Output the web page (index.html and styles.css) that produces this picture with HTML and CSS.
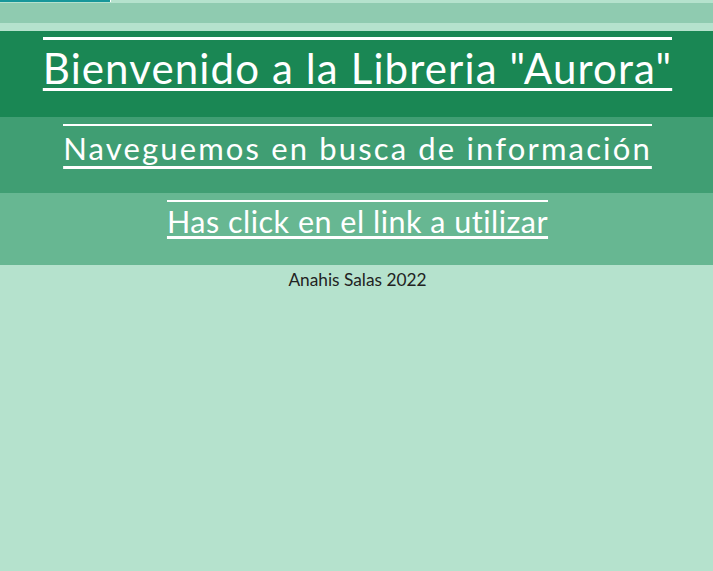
FILE: index.html
```html
<!DOCTYPE html>
<html lang="es">
<head>
<meta charset="utf-8">
<title>Libreria Aurora</title>
<link rel="stylesheet" href="styles.css">
</head>
<body>
<div class="topline"><div class="topline-mark"></div></div>
<div class="stripe"></div>
<header>
  <div class="band band-1"><h1 class="heading heading-1">Bienvenido a la Libreria "Aurora"</h1></div>
  <div class="band band-2"><h2 class="heading heading-2">Naveguemos en busca de información</h2></div>
  <div class="band band-3"><h3 class="heading heading-3">Has click en el link a utilizar</h3></div>
</header>
<footer class="footer">Anahis Salas 2022</footer>
</body>
</html>
```

FILE: styles.css
```css
html, body {
  margin: 0;
  padding: 0;
}
body {
  background: #b5e2cd;
  font-family: Lato, "Open Sans", sans-serif;
  min-height: 571px;
}
.topline {
  height: 3px;
}
.topline-mark {
  width: 110px;
  height: 2px;
  background: #17979a;
  border-right: 1px solid #ffffff;
}
.stripe {
  height: 20px;
  background: #8fcbb0;
  margin-bottom: 8px;
}
.band {
  box-sizing: border-box;
  text-align: center;
  color: #ffffff;
  padding-left: 2px;
}
.band-1 {
  background: #1a8754;
  height: 86px;
  padding-top: 6px;
}
.band-2 {
  background: #409e73;
  height: 76px;
  padding-top: 7px;
}
.band-3 {
  background: #67b792;
  height: 72px;
  padding-top: 7px;
}
.heading {
  display: inline-block;
  margin: 0;
  font-weight: 400;
  line-height: 1;
  color: #ffffff;
  text-decoration: underline;
  text-decoration-skip-ink: auto;
}
.heading-1 {
  font-size: 42px;
  letter-spacing: 1.12px;
  border-top: 3px solid #ffffff;
  padding-top: 7px;
  text-decoration-thickness: 3px;
  text-underline-offset: 4px;
}
.heading-2 {
  font-size: 31px;
  letter-spacing: 2.15px;
  border-top: 2px solid #ffffff;
  padding-top: 7px;
  text-decoration-thickness: 3px;
  text-underline-offset: 6px;
}
.heading-3 {
  font-size: 30.5px;
  letter-spacing: 0.5px;
  border-top: 2px solid #ffffff;
  padding-top: 4px;
  text-decoration-thickness: 3px;
  text-underline-offset: 3px;
}
.footer {
  text-align: center;
  font-size: 17.3px;
  color: #222222;
  padding-top: 5px;
  padding-left: 2px;
  line-height: 1.2;
}
```
